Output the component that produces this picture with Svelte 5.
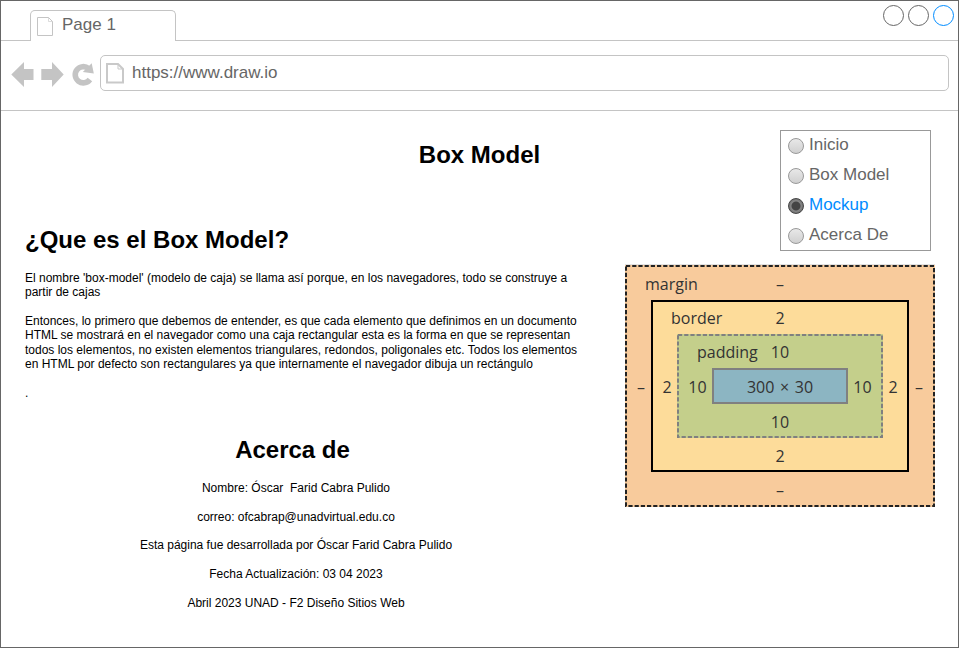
<script>
  const menu = ['Inicio', 'Box Model', 'Mockup', 'Acerca De'];
  let selected = $state('Mockup');
  const about = [
    'Nombre: Óscar \u00a0Farid Cabra Pulido',
    'correo: ofcabrap@unadvirtual.edu.co',
    'Esta página fue desarrollada por Óscar Farid Cabra Pulido',
    'Fecha Actualización: 03 04 2023',
    'Abril 2023 UNAD - F2 Diseño Sitios Web'
  ];
  const intro = [
    ["El nombre 'box-model' (modelo de caja) se llama así porque, en los navegadores, todo se construye a", 'partir de cajas'],
    [
      'Entonces, lo primero que debemos de entender, es que cada elemento que definimos en un documento',
      'HTML se mostrará en el navegador como una caja rectangular esta es la forma en que se representan',
      'todos los elementos, no existen elementos triangulares, redondos, poligonales etc. Todos los elementos',
      'en HTML por defecto son rectangulares ya que internamente el navegador dibuja un rectángulo'
    ],
    ['.']
  ];
</script>

<div class="window">
  <header class="tabs">
    <div class="tab">
      <svg class="tab-page" width="17" height="20" viewBox="0 0 17 20" fill="none" stroke="#c4c4c4">
        <path d="M.5 .5H11.5L15.5 4.5V18.5H.5Z" />
        <path d="M11.5 .5V4.5H15.5" stroke-opacity=".6" />
      </svg>
      <span>Page 1</span>
    </div>
    <div class="controls">
      <i></i><i></i><i class="active"></i>
    </div>
  </header>

  <nav class="toolbar">
    <svg class="nav-icons" width="84" height="30" viewBox="0 0 84 30" fill="#c4c4c4">
      <path d="M.3 14.5 13 2V9H22.5V20H13V27Z" />
      <path d="M52.7 14.5 41 2V9H30.3V20H41V27Z" />
      <path d="M78.9 19.5A8.1 8.1 0 1 1 77.5 8.5" fill="none" stroke="#c4c4c4" stroke-width="5.6" />
      <path d="M80.7 3.3 82.8 13.6 71.8 12Z" />
    </svg>
    <div class="address">
      <svg width="18" height="21" viewBox="0 0 18 21" fill="none" stroke="#c9c9c9" stroke-width="2">
        <path d="M1 1H12L17 6V19.5H1Z" />
        <path d="M12 1V6H17" stroke-width="1" />
      </svg>
      <span>https://www.draw.io</span>
    </div>
  </nav>

  <main>
    <article>
      <h1>Box Model</h1>
      <section class="intro">
        <h2>¿Que es el Box Model?</h2>
        {#each intro as lines}
          <p>{#each lines as line}<span>{line}</span>{/each}</p>
        {/each}
      </section>
      <section class="about">
        <h2>Acerca de</h2>
        {#each about as line}<p>{line}</p>{/each}
      </section>
    </article>

    <aside>
      <div class="menu">
        {#each menu as item}
          <button class:selected={item === selected} onclick={() => (selected = item)}>
            <i></i>{item}
          </button>
        {/each}
      </div>

      <div class="layer margin">
        <svg class="outline" width="310" height="242"><rect x="1" y="1" width="308" height="240" fill="none" stroke="#222" stroke-width="2" stroke-dasharray="4.2 2" /></svg>
        <b class="label">margin</b><b class="top">–</b><b class="left">–</b>
        <div class="layer border">
          <b class="label">border</b><b class="top">2</b><b class="left">2</b>
          <div class="layer padding">
            <svg class="outline" width="206" height="104"><rect x="1" y="1" width="204" height="102" fill="none" stroke="#808080" stroke-width="2" stroke-dasharray="4.2 2" /></svg>
            <b class="label">padding</b><b class="top">10</b><b class="left">10</b>
            <div class="content">300 × 30</div>
            <b class="right">10</b><b class="bottom">10</b>
          </div>
          <b class="right">2</b><b class="bottom">2</b>
        </div>
        <b class="right">–</b><b class="bottom">–</b>
      </div>
    </aside>
  </main>
</div>

<style>
  .window, .window * { box-sizing: border-box; }
  .window {
    width: 959px;
    height: 648px;
    border: 1px solid #666;
    background: #fff;
    font-family: 'Liberation Sans', Arial, sans-serif;
    display: flex;
    flex-direction: column;
    overflow: hidden;
  }
  .tabs {
    height: 40px;
    flex: none;
    border-bottom: 1px solid #c4c4c4;
    display: flex;
    justify-content: space-between;
    align-items: flex-end;
    padding-left: 29px;
  }
  .tab {
    width: 146px;
    height: 31px;
    margin-bottom: -1px;
    background: #fff;
    border: 1px solid #c4c4c4;
    border-bottom: 0;
    border-radius: 5px 5px 0 0;
    display: flex;
    color: #666;
    font-size: 17px;
    line-height: 27px;
  }
  .tab-page { margin: 6px 8px 0 6px; }
  .controls { display: flex; gap: 4px; align-self: flex-start; padding: 4px 4px 0 0; }
  .controls i { width: 21px; height: 21px; border: 1px solid #666; border-radius: 50%; }
  .controls .active { border-color: #008cff; }
  .toolbar {
    height: 70px;
    flex: none;
    border-bottom: 1px solid #c4c4c4;
    display: flex;
    padding: 14px 9px 0 10px;
  }
  .nav-icons { margin: 5px 5px 0 0; }
  .address {
    flex: 1;
    height: 36px;
    border: 1px solid #c4c4c4;
    border-radius: 5px;
    display: flex;
    gap: 8px;
    padding: 7px 0 0 5px;
    color: #666;
    font-size: 17px;
    line-height: 20px;
  }
  main { display: flex; padding-left: 24px; }
  article { width: 600px; }
  h1, h2 { margin: 0; font-size: 24px; line-height: 29px; font-weight: bold; color: #000; }
  h1 { margin: 29px 0 0 333px; width: 243px; text-align: center; }
  p { margin: 0 0 14.4px; font-size: 12px; line-height: 14.4px; color: #000; white-space: nowrap; }
  p span { display: block; }
  .intro { margin-top: 56px; height: 210px; }
  .intro h2, .about h2 { margin-bottom: 16.8px; }
  .about { width: 542px; text-align: center; }
  .about h2 { width: 535px; }
  aside { width: 310px; padding-top: 19px; }
  .menu {
    width: 151px;
    height: 121px;
    margin: 0 0 14px 155px;
    border: 1px solid #999;
    display: flex;
    flex-direction: column;
  }
  button {
    height: 30px;
    flex: none;
    border: 0;
    padding: 0 0 2px 7px;
    background: none;
    display: flex;
    align-items: center;
    gap: 5px;
    font: 17px 'Liberation Sans', Arial, sans-serif;
    color: #666;
  }
  button i {
    width: 16px;
    height: 16px;
    margin-top: 2px;
    border: 1px solid #999;
    border-radius: 50%;
    background: linear-gradient(#e8e8e8, #d0d0d0);
  }
  button.selected { color: #008cff; }
  button.selected i { border-color: #444; background: radial-gradient(circle, #444 4px, #888 5px, #666 8px); }
  .layer {
    position: relative;
    display: grid;
    align-items: center;
    justify-items: center;
  }
  .layer b, .content {
    font: 16px/20px 'Open Sans', 'Noto Sans', sans-serif;
    color: #333;
  }
  .layer b { padding-top: 2px; }
  .top { grid-area: 1 / 2; }
  .layer .left { grid-area: 2 / 1; padding-left: 6px; }
  .layer .right { grid-area: 2 / 3; padding-right: 6px; }
  .layer .bottom { grid-area: 3 / 2; padding-top: 1px; }
  .layer .label { grid-area: 1 / 1 / 2 / 4; justify-self: start; padding-left: 20px; }
  .layer > .layer, .content { grid-area: 2 / 2; }
  .outline { position: absolute; left: 0; top: 0; }
  .margin { width: 310px; height: 242px; background: #f8cb9c; box-shadow: 0 -1px #e2e2e2; grid-template: 35px 172px 35px / 26px 258px 26px; }
  .border { width: 258px; height: 172px; background: #fddc9a; box-shadow: inset 0 0 0 2px #000; grid-template: 34px 104px 34px / 26px 206px 26px; }
  .padding { width: 206px; height: 104px; background: #c4cf8b; grid-template: 34px 36px 34px / 35px 136px 35px; }
  .content { width: 136px; height: 36px; border: 2px solid #808080; background: #8cb5c2; text-align: center; line-height: 34px; word-spacing: 1.5px; }
</style>
